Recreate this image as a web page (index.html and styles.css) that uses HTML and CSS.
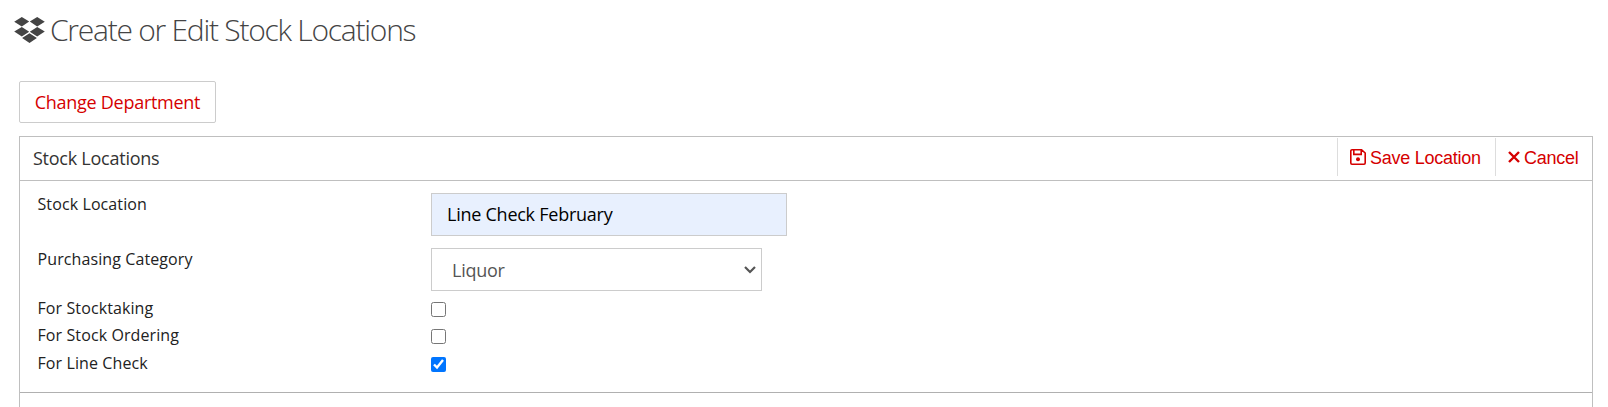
FILE: index.html
```html
<!DOCTYPE html>
<html lang="en">
  <head>
    <meta charset="UTF-8" />
    <meta name="viewport" content="width=device-width, initial-scale=1.0" />
    <title>Create or Edit Stock Locations</title>
    <link rel="stylesheet" href="styles.css">
  </head>
  <body>
    <h1 class="page-title">
      <svg class="title-icon" viewBox="0 0 31 26" aria-hidden="true">
        <path d="M7.8 0l7.4 4.6-7.4 4.9L.2 4.7zM23.2 0l7.6 4.7-7.6 4.8-7.4-4.9zM7.8 10l7.4 4.7-7.4 4.7L.2 14.6zM23.2 10l7.6 4.6-7.6 4.8-7.4-4.7zM15.5 16.2l7.4 4.9-7.4 4.9-7.4-4.9z" />
      </svg>
      <span>Create or Edit Stock Locations</span>
    </h1>

    <button type="button" class="btn-department">Change Department</button>

    <div class="panel">
      <div class="panel-header">
        <h2>Stock Locations</h2>
        <div class="panel-actions">
          <button type="button" class="action action-save">
            <svg class="icon-save" viewBox="0 0 16 16" aria-hidden="true">
              <path d="M2 .8h9.6L15.2 4v10a1.2 1.2 0 0 1-1.2 1.2H2A1.2 1.2 0 0 1 .8 14V2A1.2 1.2 0 0 1 2 .8zM3.8 1v4.4h7.4V1" />
              <circle cx="8" cy="10.3" r="2" />
            </svg>
            <span>Save Location</span>
          </button>
          <button type="button" class="action action-cancel">
            <svg class="icon-cancel" viewBox="0 0 12 12" aria-hidden="true">
              <path d="M1 1l10 10M11 1L1 11" />
            </svg>
            <span>Cancel</span>
          </button>
        </div>
      </div>

      <form class="panel-body">
        <div class="row row-input">
          <label for="location">Stock Location</label>
          <input type="text" id="location" class="text-field" value="Line Check February" />
        </div>
        <div class="row row-select">
          <label for="category">Purchasing Category</label>
          <div class="select-wrap">
            <select id="category" class="select-field">
              <option>Liquor</option>
            </select>
            <svg class="select-arrow" viewBox="0 0 12 8" aria-hidden="true">
              <path d="M1 1l5 5 5-5" />
            </svg>
          </div>
        </div>
        <div class="row row-check">
          <label for="stocktaking">For Stocktaking</label>
          <input type="checkbox" id="stocktaking" class="check" />
        </div>
        <div class="row row-check">
          <label for="ordering">For Stock Ordering</label>
          <input type="checkbox" id="ordering" class="check" />
        </div>
        <div class="row row-check row-last">
          <label for="linecheck">For Line Check</label>
          <input type="checkbox" id="linecheck" class="check" checked />
        </div>
      </form>
      <div class="panel-footer"></div>
    </div>
  </body>
</html>
```

FILE: styles.css
```css
* {
  margin: 0;
  padding: 0;
  box-sizing: border-box;
}

body {
  font-family: "Open Sans", sans-serif;
  background: #fff;
  color: #222;
}

.page-title {
  display: flex;
  align-items: center;
  gap: 5px;
  height: 81px;
  padding: 0 0 22px 14px;
  font-size: 30px;
  font-weight: 300;
  letter-spacing: -1.25px;
  color: #444;
}

.title-icon {
  width: 31px;
  height: 26px;
  fill: #444;
}

.btn-department {
  display: block;
  width: 197px;
  height: 42px;
  margin-left: 19px;
  font-family: inherit;
  font-size: 18px;
  letter-spacing: -0.27px;
  color: #d50000;
  background: #fff;
  border: 1px solid #ccc;
  border-radius: 2px;
}

.panel {
  margin: 13px 15px 0 19px;
  border: 1px solid #bfbfbf;
  border-bottom: 0;
}

.panel-header {
  display: flex;
  justify-content: space-between;
  height: 44px;
  border-bottom: 1px solid #bfbfbf;
}

.panel-header h2 {
  padding-left: 13px;
  font-size: 18px;
  font-weight: 400;
  line-height: 42px;
  letter-spacing: -0.25px;
  color: #333;
}

.panel-actions {
  display: flex;
  padding-top: 1px;
}

.action {
  display: flex;
  align-items: center;
  height: 38px;
  font-family: "Liberation Sans", Arial, sans-serif;
  font-size: 18px;
  letter-spacing: -0.25px;
  color: #d50000;
  background: none;
  border: 0;
  border-left: 1px solid #ddd;
}

.action span {
  padding-top: 2px;
}

.action-save {
  width: 158px;
  gap: 4px;
  padding-left: 12px;
}

.action-cancel {
  width: 97px;
  gap: 4px;
  padding-left: 12px;
}

.icon-save {
  width: 16px;
  height: 16px;
  fill: none;
  stroke: currentColor;
  stroke-width: 1.6;
}

.icon-save circle {
  fill: currentColor;
  stroke: none;
}

.icon-cancel {
  width: 12px;
  height: 12px;
  fill: none;
  stroke: currentColor;
  stroke-width: 2.4;
}

.panel-body {
  height: 212px;
  padding: 11px 0 0 17.5px;
  border-bottom: 1px solid #b0b0b0;
}

.row {
  display: grid;
  grid-template-columns: 393.5px 1fr;
  align-items: start;
  font-size: 16px;
  line-height: 24px;
  letter-spacing: 0.1px;
}

.row-input {
  height: 55px;
}

.row-select {
  height: 49px;
}

.row-check {
  height: 27px;
}

.row-last {
  margin-top: 1px;
}

.text-field,
.select-field {
  height: 43px;
  font-family: inherit;
  font-size: 18px;
  letter-spacing: -0.25px;
  border: 1px solid #ccc;
  border-radius: 0;
}

.text-field {
  width: 356px;
  margin-top: 1px;
  padding: 0 15px 2px;
  color: #000;
  background: #e8f0fe;
}

.select-wrap {
  position: relative;
  width: 331px;
  height: 43px;
  margin-top: 1px;
}

.select-field {
  display: block;
  width: 100%;
  padding: 0 30px 0 20px;
  color: #555;
  background: #fff;
  appearance: none;
}

.select-arrow {
  position: absolute;
  top: 18px;
  right: 6px;
  width: 12px;
  height: 8px;
  fill: none;
  stroke: #555;
  stroke-width: 2.2;
  pointer-events: none;
}

.check {
  width: 15px;
  height: 15px;
  margin-top: 6px;
}

.panel-footer {
  height: 14px;
}
```
